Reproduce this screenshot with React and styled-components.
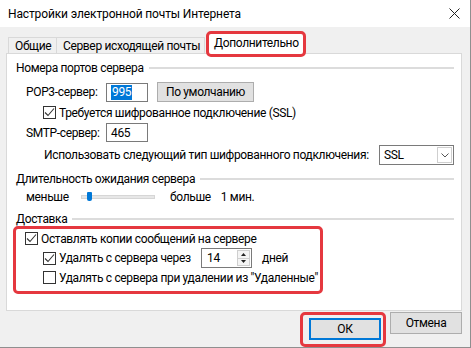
import React from 'react';
import styled, { createGlobalStyle } from 'styled-components';

const GlobalStyle = createGlobalStyle`
  html, body {
    margin: 0;
    padding: 0;
  }
  body {
    background: #f0f0f0;
    font-family: Roboto, "Noto Sans", "Liberation Sans", sans-serif;
    font-size: 12px;
    letter-spacing: -0.35px;
    color: #000;
  }
`;

const RED = '#e5383f';

const Window = styled.div`
  width: 471px;
  height: 348px;
  box-sizing: border-box;
  border-right: 1px solid #8f8f8f;
  border-bottom: 1px solid #8f8f8f;
  background: #f0f0f0;
  display: flex;
  flex-direction: column;
  overflow: hidden;
`;

const TitleBar = styled.div`
  height: 27px;
  flex-shrink: 0;
  background: #fff;
  display: flex;
  align-items: center;
  justify-content: space-between;
  padding: 0 10px 0 8px;
  font-size: 12px;
  letter-spacing: -0.13px;
`;

const Body = styled.div`
  flex: 1;
  display: flex;
  flex-direction: column;
  padding: 4px 8px 0 6px;
`;

const TabRow = styled.div`
  height: 22px;
  display: flex;
  align-items: flex-end;
  padding-left: 2px;
`;

const Tab = styled.div`
  width: ${p => p.w}px;
  height: 16px;
  box-sizing: border-box;
  border: 1px solid #d9d9d9;
  border-bottom: none;
  border-left-width: ${p => (p.first ? 1 : 0)}px;
  background: #f0f0f0;
  display: flex;
  align-items: center;
  padding-left: ${p => p.pl}px;
  white-space: nowrap;
`;

const ActiveTab = styled.div`
  position: relative;
  z-index: 2;
  margin-left: 1px;
  margin-bottom: -4px;
  width: 100px;
  height: 26px;
  box-sizing: border-box;
  border: 3px solid ${RED};
  border-radius: 5px;
  background: #fff;
  display: flex;
  align-items: center;
  padding-left: 5px;
  padding-bottom: 2px;
  white-space: nowrap;
`;

const Panel = styled.div`
  height: 258px;
  box-sizing: border-box;
  border: 1px solid #d9d9d9;
  background: #fff;
  padding: 0 7px 0 9px;
  display: flex;
  flex-direction: column;
  flex-shrink: 0;
`;

const GroupHeader = styled.div`
  height: 14px;
  margin-top: ${p => p.mt}px;
  display: flex;
  align-items: center;
  gap: 5px;
  white-space: nowrap;

  &::after {
    content: '';
    flex: 1;
    height: 2px;
    background: #dcdcdc;
  }
`;

const Row = styled.div`
  display: flex;
  align-items: center;
  height: ${p => p.h || 15}px;
  margin-top: ${p => p.mt || 0}px;
  padding-left: ${p => p.pl || 0}px;
  white-space: nowrap;
`;

const Label = styled.span`
  width: ${p => (p.w ? `${p.w}px` : 'auto')};
  flex-shrink: 0;
  margin-left: ${p => p.ml || 0}px;
`;

const TextBox = styled.div`
  width: 42px;
  height: 19px;
  box-sizing: border-box;
  border: 1px solid #7a7a7a;
  background: #fff;
  display: flex;
  align-items: center;
  padding-left: 4px;
`;

const Selected = styled.span`
  background: #0078d7;
  color: #fff;
  padding: 0 1px;
  line-height: 15px;
`;

const Button = styled.div`
  width: ${p => p.w}px;
  height: ${p => p.h}px;
  box-sizing: border-box;
  border: ${p => (p.primary ? '2px solid #0078d7' : '1px solid #adadad')};
  background: #e1e1e1;
  display: flex;
  align-items: center;
  justify-content: center;
  margin-left: ${p => p.ml || 0}px;
  flex-shrink: 0;
`;

const Box = styled.span`
  width: 13px;
  height: 13px;
  box-sizing: border-box;
  border: 1px solid #333;
  background: #fff;
  margin-right: 3px;
  flex-shrink: 0;
  display: flex;
  align-items: center;
  justify-content: center;
`;

const Select = styled.div`
  margin-left: auto;
  width: 75px;
  height: 20px;
  box-sizing: border-box;
  border: 1px solid #7a7a7a;
  background: #fff;
  display: flex;
  align-items: center;
  padding-left: 4px;
`;

const SelectArrow = styled.div`
  margin-left: auto;
  margin-right: 1px;
  width: 15px;
  height: 16px;
  box-sizing: border-box;
  border: 1px solid #cfcfcf;
  display: flex;
  align-items: center;
  justify-content: center;
`;

const Track = styled.div`
  position: relative;
  width: 74px;
  height: 4px;
  box-sizing: border-box;
  border: 1px solid #d6d6d6;
  background: #e7e7e7;
  flex-shrink: 0;
`;

const Thumb = styled.div`
  position: absolute;
  left: 5px;
  top: -4px;
  width: 5px;
  height: 9px;
  background: #0078d7;
  border-radius: 1px 1px 2px 2px;
`;

const Delivery = styled.div`
  margin-left: -3px;
  width: 310px;
  height: 68px;
  box-sizing: border-box;
  border: 3px solid ${RED};
  border-radius: 5px;
  padding-top: 2px;
  display: flex;
  flex-direction: column;
`;

const Spin = styled.div`
  width: 51px;
  height: 20px;
  box-sizing: border-box;
  border: 1px solid #7a7a7a;
  background: #fff;
  display: flex;
  align-items: center;
  padding-left: 5px;
`;

const SpinButtons = styled.div`
  margin-left: auto;
  margin-right: 1px;
  width: 13px;
  height: 16px;
  display: flex;
  flex-direction: column;
  border: 1px solid #cfcfcf;
  box-sizing: border-box;
`;

const SpinHalf = styled.div`
  flex: 1;
  display: flex;
  align-items: center;
  justify-content: center;
  background: #f4f4f4;
  border-top: ${p => (p.lower ? '1px solid #cfcfcf' : 'none')};
`;

const Footer = styled.div`
  display: flex;
  justify-content: flex-end;
  align-items: flex-start;
  padding-top: 1px;
`;

const Highlight = styled.div`
  height: 35px;
  box-sizing: border-box;
  border: 3px solid ${RED};
  border-radius: 5px;
  padding: 3px 2px 0 6px;
`;

function CheckBox({ checked }) {
  return (
    <Box>
      {checked && (
        <svg width="11" height="11" viewBox="0 0 11 11">
          <path d="M1 5.5 L4 8.5 L10 1.5" fill="none" stroke="#333" strokeWidth="1.1" />
        </svg>
      )}
    </Box>
  );
}

function Chevron() {
  return (
    <svg width="8" height="5" viewBox="0 0 8 5">
      <path d="M0.5 0.5 L4 4 L7.5 0.5" fill="none" stroke="#555" strokeWidth="1" />
    </svg>
  );
}

function Triangle({ down }) {
  return (
    <svg width="5" height="3" viewBox="0 0 5 3">
      <path d={down ? 'M0 0 L5 0 L2.5 3 Z' : 'M0 3 L5 3 L2.5 0 Z'} fill="#222" />
    </svg>
  );
}

export default function App() {
  return (
    <>
      <GlobalStyle />
      <Window>
        <TitleBar>
          <span>Настройки электронной почты Интернета</span>
          <svg width="11" height="11" viewBox="0 0 11 11">
            <path d="M0.5 0.5 L10.5 10.5 M10.5 0.5 L0.5 10.5" stroke="#222" strokeWidth="1" />
          </svg>
        </TitleBar>
        <Body>
          <TabRow>
            <Tab first w={49} pl={6}>Общие</Tab>
            <Tab w={148} pl={6}>Сервер исходящей почты</Tab>
            <ActiveTab>Дополнительно</ActiveTab>
          </TabRow>
          <Panel>
            <GroupHeader mt={7}>Номера портов сервера</GroupHeader>
            <Row h={20} mt={7} pl={10}>
              <Label w={80}>POP3-сервер:</Label>
              <TextBox>
                <Selected>995</Selected>
              </TextBox>
              <Button w={97} h={20} ml={9}>По умолчанию</Button>
            </Row>
            <Row mt={3} pl={27}>
              <CheckBox checked />
              <span>Требуется шифрованное подключение (SSL)</span>
            </Row>
            <Row h={19} mt={3} pl={10}>
              <Label w={80}>SMTP-сервер:</Label>
              <TextBox>465</TextBox>
            </Row>
            <Row h={20} mt={3} pl={28}>
              <span>Использовать следующий тип шифрованного подключения:</span>
              <Select>
                SSL
                <SelectArrow>
                  <Chevron />
                </SelectArrow>
              </Select>
            </Row>
            <GroupHeader mt={7}>Длительность ожидания сервера</GroupHeader>
            <Row h={16} mt={3} pl={10}>
              <Label w={55}>меньше</Label>
              <Track>
                <Thumb />
              </Track>
              <Label ml={15}>больше</Label>
              <Label ml={10}>1 мин.</Label>
            </Row>
            <GroupHeader mt={7}>Доставка</GroupHeader>
            <Delivery>
              <Row pl={9}>
                <CheckBox checked />
                <span>Оставлять копии сообщений на сервере</span>
              </Row>
              <Row h={20} mt={2} pl={27}>
                <CheckBox checked />
                <Label w={142}>Удалять с сервера через</Label>
                <Spin>
                  14
                  <SpinButtons>
                    <SpinHalf>
                      <Triangle />
                    </SpinHalf>
                    <SpinHalf lower>
                      <Triangle down />
                    </SpinHalf>
                  </SpinButtons>
                </Spin>
                <Label ml={10}>дней</Label>
              </Row>
              <Row mt={2} pl={27}>
                <CheckBox />
                <span>Удалять с сервера при удалении из "Удаленные"</span>
              </Row>
            </Delivery>
          </Panel>
          <Footer>
            <Highlight>
              <Button primary w={72} h={22}>ОК</Button>
            </Highlight>
            <Button w={72} h={22} ml={4}>Отмена</Button>
          </Footer>
        </Body>
      </Window>
    </>
  );
}
